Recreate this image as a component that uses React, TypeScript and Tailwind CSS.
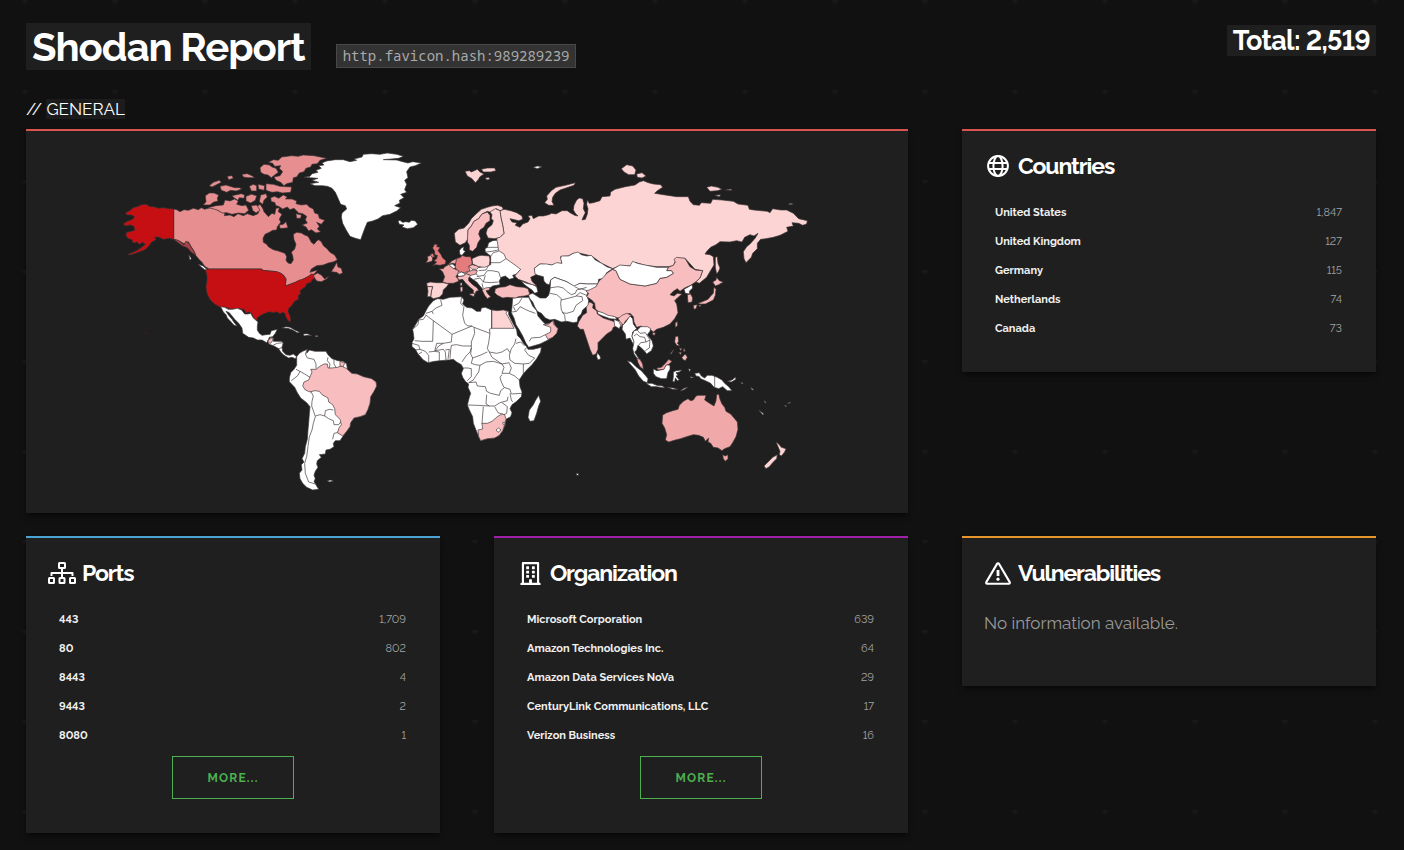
import type { ReactNode } from "react";
import { FaRegBuilding } from "react-icons/fa";

type Shape = [fill: string, d: string];

const WHITE = "#ffffff";
const US = "#c60f13";
const CANADA = "#e78f90";
const STRONG = "#e47c7e";
const MEDIUM = "#f0a8a9";
const SOFT = "#f8bdbe";
const PALE = "#fcd4d4";

const northAmerica: Shape[] = [
  [CANADA, "M191 192L200 194 210 200 222 194 235 196 250 190 265 194 274 188 284 193 300 188 318 192 330 200 345 205 343 212 360 210 372 215 384 206 400 212 412 206 430 212 444 206 448 195 440 185 450 178 458 190 462 200 475 215 486 205 494 208 498 190 508 188 505 200 516 208 508 222 512 232 502 245 500 255 488 256 478 262 465 268 459 280 460 292 470 298 476 306 490 314 505 318 525 325 530 335 528 346 534 354 543 356 550 345 548 332 544 322 554 312 558 298 552 284 550 268 560 262 574 264 584 270 594 274 600 284 604 292 612 298 620 288 626 284 634 290 640 302 652 312 660 322 674 330 682 344 672 350 655 354 640 360 620 362 604 372 600 382 612 378 622 376 612 388 592 396 575 405 556 412 540 418 526 423 528 402 520 390 500 380 458 376 455 372 297 372 284 364 276 352 268 344 258 332 252 318 244 306 235 290 222 296 208 288 191 283Z"],
  [US, "M297 372H455L458 376 478 378 500 380 512 384 520 390 528 402 526 423 540 418 556 412 566 406 578 403 592 396 604 387 612 388 618 399 608 403 602 412 590 416 586 425 576 432 570 437 572 446 564 452 566 462 552 470 545 482 536 490 534 500 539 510 542 522 541 530 535 528 528 516 524 504 518 502 510 506 500 500 490 503 478 500 462 506 450 512 442 518 440 527 432 520 426 508 418 500 408 504 404 495 392 491 375 492 360 492 347 487 332 487 315 478 302 466 294 452 290 440 288 425 291 408 291 392 286 374Z"],
  [US, "M191 192L176 191 160 188 146 190 130 185 120 185 108 178 92 180 86 184 70 188 58 198 46 204 52 210 66 210 74 216 66 224 50 230 40 237 46 242 62 240 72 244 74 256 60 260 50 262 48 272 54 280 66 284 68 292 76 294 80 290 88 298 98 292 106 298 94 308 78 318 54 328 60 330 84 322 104 314 116 304 124 292 138 284 134 276 146 276 160 283 178 280 191 283Z"],
  ["#a94145", "M191 283L205 286 215 294 222 300 228 288 238 296 244 308 250 316 256 330 244 322 232 308 216 302Z"],
  [CANADA, "M475 52L490 44 505 46 515 36 545 32 565 34 580 30 612 32 650 40 630 46 622 56 606 58 602 66 588 70 582 80 568 84 560 96 550 98 548 112 530 116 522 122 512 112 498 106 492 96 510 92 518 80 508 70 512 62 494 64 488 55Z"],
  [CANADA, "M450 68L462 58 478 60 486 66 498 70 505 82 494 90 484 98 474 90 462 88 452 82Z"],
  [CANADA, "M468 116L490 118 510 124 545 126 542 142 518 144 502 140 486 142 468 136Z"],
  [CANADA, "M482 158L494 154 506 160 520 150 532 156 526 162 546 162 560 168 558 176 574 180 590 178 598 186 610 192 614 204 625 208 628 220 644 226 634 238 620 232 628 244 622 252 632 260 618 264 604 254 596 258 588 246 576 240 592 234 586 224 590 214 578 206 566 204 552 190 540 194 532 186 518 192 506 184 498 182 494 172 484 170Z"],
  [CANADA, "M345 165L360 168 374 162 385 168 380 178 396 182 408 180 416 196 404 206 385 204 366 208 350 203 336 204 324 196 304 190 294 188 318 182 340 180Z"],
  [CANADA, "M286 152L298 144 312 144 326 150 322 160 324 168 310 172 300 180 280 180 288 170Z"],
  [CANADA, "M298 122L310 112 328 106 334 112 318 120 306 126Z"],
  [CANADA, "M330 124L348 120 360 124 374 128 388 128 396 132 378 138 362 136 350 142 334 136Z"],
  [CANADA, "M396 88L412 86 426 92 434 98 414 98 400 96Z"],
  [CANADA, "M418 124L430 118 440 122 440 138 424 138Z"],
  [CANADA, "M408 154L424 148 440 152 436 166 422 174 408 168Z"],
  [CANADA, "M452 150L468 146 472 156 462 166 458 178 448 170Z"],
  [CANADA, "M444 118L464 122 462 136 446 132Z"],
  [CANADA, "M366 152L394 146 404 150 402 160 388 158 384 166 374 160Z"],
  [CANADA, "M424 182L440 180 450 196 438 204 428 196Z"],
  [CANADA, "M508 240L520 238 528 230 534 248 520 250 510 250Z"],
  [CANADA, "M558 206L574 210 572 220 560 220Z"],
  [CANADA, "M352 94L366 92 370 100 356 104Z"],
  [CANADA, "M610 392L622 384 634 390 644 402 656 394 650 402 634 410 620 408Z"],
  [CANADA, "M664 380L674 364 680 352 684 366 694 370 698 384 688 388 680 382Z"],
  [WHITE, "M264 358L278 362 292 374 284 374Z"],
  [WHITE, "M236 330L244 340 240 346Z"],
];

const northAtlantic: Shape[] = [
  [WHITE, "M162 97L180 94 186 86 204 82 198 76 214 70 206 62 222 60 216 54 230 48 256 44 280 44 300 50 320 46 312 42 336 36 340 28 364 26 390 28 412 24 440 28 460 34 446 40 400 44 440 45 458 50 474 54 488 50 514 54 496 62 480 66 470 80 474 98 464 106 470 118 464 134 470 142 452 148 462 158 448 166 450 174 434 182 452 188 440 198 420 208 398 212 384 222 368 228 352 232 346 246 340 262 332 284 316 280 300 274 288 254 278 235 274 216 276 204 290 192 286 182 272 178 266 164 256 142 246 130 232 124 216 122 195 122 180 116 206 112 186 106 204 100Z"],
  [WHITE, "M444 228L450 226 458 232 468 230 478 232 484 226 496 228 503 238 490 248 472 251 456 246 462 240 448 238Z"],
];

/* Latin America is drawn as a landmass with tinted countries and borders laid over it. */
const latinAmerica: Shape[] = [
  [WHITE, "M62 50L74 52 85 58 98 58 112 55 125 60 134 72 144 72 152 70 160 84 174 96 172 108 172 120 178 130 186 136 198 134 210 133 214 122 232 118 226 130 218 140 208 142 204 152 200 158 186 150 172 150 160 144 146 142 128 130 126 114 116 100 104 88 96 78 88 68 78 64 86 76 96 88 104 100 112 108 102 106 90 92 82 84 78 74 70 66Z"],
  [WHITE, "M203 152L212 142 220 144 220 154 244 154 250 158 246 172 248 184 258 194 270 196 280 192 290 200 286 206 276 202 266 204 252 196 242 186 236 176 222 168 206 162Z"],
  [SOFT, "M206 150L216 142 218 152 212 160 204 158Z"],
  [WHITE, "M246 114L258 110 270 112 284 120 300 127 292 128 278 120 264 115Z"],
  [WHITE, "M310 132L322 131 336 137 322 136 312 138Z"],
  [WHITE, "M346 137H354V140H346Z"],
  [WHITE, "M290 200L298 190 308 184 322 178 320 190 328 180 345 184 362 184 378 184 384 194 396 206 414 212 430 214 440 222 442 238 455 250 472 252 490 260 515 266 528 276 530 288 522 304 512 320 510 340 504 358 496 374 480 380 462 384 452 398 450 410 440 424 428 440 420 452 406 452 400 460 402 470 390 478 378 480 376 492 358 494 364 502 352 512 350 522 354 532 346 544 342 556 346 566 342 574 350 588 356 598 338 600 320 592 308 580 300 566 298 550 306 540 304 524 312 516 306 506 314 490 316 470 322 448 324 420 326 398 328 372 330 350 320 338 302 324 292 308 284 292 268 275 268 264 272 248 282 238 290 226 290 212Z"],
  [SOFT, "M440 236L455 250 472 252 490 260 515 266 528 276 530 288 522 304 512 320 510 340 504 358 496 374 480 380 462 384 452 398 450 410 440 424 428 438 412 428 418 412 424 404 420 388 406 374 404 356 398 344 386 336 384 324 366 314 358 304 344 302 330 306 316 300 308 288 312 276 326 270 332 256 336 246 332 238 348 238 358 230 372 222 382 222 384 234 396 234 412 232 424 228Z"],
  [SOFT, "M420 214L434 218 430 230 420 228Z"],
  ["none", "M220 165L232 160 250 158M236 176L248 172M322 178L316 192 322 204 342 208 348 222 348 236M384 202L382 212 390 222 388 234M402 210L402 222 408 232M288 238L300 244 294 256 282 266 274 272M300 244L314 252 330 262M332 304L340 318 336 334 335 348 340 362 346 380 340 400 336 420 328 440 324 470 320 500 314 520 316 550 326 576 346 582M346 378L360 374 374 378 376 362 388 358 400 360M374 378L386 386 400 392 402 404 416 404 422 396M412 428L402 430 398 448"],
  [WHITE, "M382 572L392 570 400 573 388 576Z"],
];

const eurasia: Shape[] = [
  [WHITE, "M255 296L262 292 266 278 278 272 295 270 300 290 320 310 345 338 364 356 350 372 338 376 342 384 328 388 316 378 304 382 298 392 300 404 278 408 270 414 250 420 240 408 230 396 218 388 204 378 180 378 170 370 180 350 240 352 272 344 272 318 256 306Z"],
  ["none", "M256 292L294 292M258 306L276 304 294 300M271 320L280 308 296 304M270 338L300 338 318 326M262 362L276 362 296 366 302 384M236 362L258 360 266 346M230 380L252 376 262 362M222 388L240 384 250 396 270 398 296 396M246 400L250 416M256 376L250 396M228 372L236 378"],
  [PALE, "M300 182L312 178 332 182 350 188 366 198 368 208 356 212 338 208 330 206 336 216 350 218 346 226 360 232 368 222 384 216 390 206 384 198 396 196 400 206 416 198 430 198 446 194 455 190 468 192 486 182 502 182 510 188 524 196 534 198 526 190 520 180 522 166 530 150 538 144 548 146 552 160 550 176 556 188 550 200 546 210 556 208 562 192 564 176 560 164 562 150 568 160 580 158 600 152 606 140 630 138 632 126 645 118 676 110 705 105 718 96 730 92 745 98 760 102 782 104 788 112 772 122 764 130 790 134 830 140 865 140 870 154 880 164 898 166 904 158 932 160 938 148 966 150 1000 154 1014 162 1044 166 1048 178 1062 180 1102 184 1110 188 1118 176 1142 180 1160 180 1180 190 1196 206 1222 212 1220 222 1208 226 1196 220 1176 218 1180 228 1160 232 1164 244 1140 256 1120 262 1098 266 1082 268 1072 280 1072 296 1058 310 1054 322 1038 338 1032 326 1030 305 1040 290 1050 282 1066 264 1074 250 1062 258 1050 254 1034 262 1026 276 1010 272 990 276 960 275 948 284 932 292 922 302 915 312 930 314 940 320 942 345 928 368 920 382 898 400 888 396 900 384 908 362 885 358 855 325 830 325 820 347 805 350 770 350 735 346 705 337 690 348 660 347 638 356 605 340 575 318 540 310 520 310 505 318 482 320 486 340 455 345 420 342 403 355 408 374 392 382 396 394 410 408 396 404 372 394 355 388 344 378 362 358 345 345 318 326 312 312 296 302 292 276 290 265 304 258 312 250 308 225 303 204Z"],
  [PALE, "M163 250L176 238 192 234 206 220 214 206 228 192 244 178 262 172 276 168 292 166 306 170 310 178 300 182 288 176 276 188 262 184 246 192 236 206 222 214 214 228 204 240 204 266 196 278 180 286 166 276Z"],
  [SOFT, "M262 186L270 196 270 212 258 220 252 232 240 240 236 252 242 266 234 278 230 292 218 304 208 300 208 286 202 276 204 240 214 228 222 214 236 206 246 192Z"],
  [PALE, "M270 186L286 176 300 182 303 204 308 225 312 250 300 262 284 266 264 264 258 250 262 236 276 224 280 212 274 206 276 194Z"],
  [PALE, "M195 64L208 62 214 66 232 58 240 66 252 72 240 80 234 90 226 98 216 86 202 78Z"],
  [PALE, "M244 58L262 54 284 54 288 62 272 66 250 66Z"],
  [PALE, "M256 84L266 82 270 88 260 90Z"],
  [WHITE, "M400 52L412 48 426 50 412 56Z"],
  [PALE, "M526 98L522 106 498 114 480 120 466 130 458 142 456 154 462 166 446 166 434 158 442 148 440 138 454 122 468 112 496 106Z"],
  [STRONG, "M98 294L104 282 112 284 110 290 120 292 114 302 122 312 128 324 138 332 136 342 120 346 106 344 98 348 110 336 102 332 110 326 112 316 104 314 104 304Z"],
  [STRONG, "M90 314L98 310 104 320 96 322Z"],
  [MEDIUM, "M82 320L92 316 98 324 96 334 78 338 84 328Z"],
  [WHITE, "M178 302L184 294 192 290 190 300 196 304 186 316 180 314Z"],
  [STRONG, "M168 326L182 322 186 316 198 320 212 320 216 334 216 344 206 350 210 362 194 368 176 366 166 354Z"],
  [MEDIUM, "M156 332L170 326 166 342 158 340 144 344Z"],
  [WHITE, "M142 344L158 342 168 352 160 356Z"],
  [MEDIUM, "M118 356L130 356 134 350 146 344 158 354 176 362 174 370 168 380 174 386 176 394 160 400 140 400 128 396 134 380 128 366Z"],
  [WHITE, "M172 372L184 366 196 372 190 378 176 380Z"],
  [PALE, "M80 400L90 396 110 398 130 398 146 402 140 410 130 420 128 432 118 442 100 446 92 440 94 424 98 410 82 410Z"],
  [PALE, "M82 410L98 410 94 424 92 440 82 440 84 424Z"],
  [SOFT, "M172 380L190 378 200 370 212 376 206 384 206 392 218 404 232 414 236 422 228 424 226 432 220 432 220 420 208 410 196 398 188 388 176 390Z"],
  [SOFT, "M208 432L224 430 222 440 212 436Z"],
  [WHITE, "M180 400L186 398 186 406 182 408Z"],
  [SOFT, "M180 412L188 410 188 424 182 426Z"],
  [MEDIUM, "M196 370L208 364 220 360 232 362 228 372 212 376Z"],
  [SOFT, "M206 348L218 344 238 350 230 358 216 358Z"],
  [PALE, "M216 326L234 318 244 316 268 318 270 330 268 346 254 352 236 350 218 342Z"],
  [SOFT, "M246 420L256 414 270 412 268 420 258 422 264 432 272 440 262 446 254 436Z"],
  [SOFT, "M286 416L298 412 316 410 330 404 350 410 372 412 384 416 390 434 374 438 356 440 346 444 322 442 308 444 292 436 284 428Z"],
  [WHITE, "M362 392L380 400 398 404 410 410 414 426 404 430 396 420 384 412 374 404Z"],
  [WHITE, "M403 355L420 342 440 342 455 345 470 338 486 340 482 326 484 318 505 318 520 310 534 306 544 314 560 318 574 316 586 330 605 340 620 350 638 356 626 364 618 370 620 384 596 388 594 402 560 402 540 400 522 410 500 395 480 388 464 382 452 390 448 404 440 402 432 394 430 380 414 376 405 372Z"],
  [WHITE, "M452 390L464 382 480 388 500 395 522 408 540 400 560 402 594 402 584 418 566 424 560 436 566 452 564 466 548 480 544 492 534 502 532 516 520 518 500 514 484 516 464 508 450 510 436 504 424 490 412 484 404 470 398 456 388 444 386 434 398 430 420 444 438 444 446 436 450 420Z"],
  ["none", "M448 414L474 410 490 414 500 424 514 434M450 430L470 434 484 446 482 460 484 480 494 496 496 514M484 450L508 444 530 438 546 440 548 452 528 466 520 484 500 490 486 488M514 434L526 430 530 420 544 416 566 424M524 410L540 418 560 412M528 438L540 428 560 436"],
];

const eastAsia: Shape[] = [
  [SOFT, "M158 358L168 362 175 378 180 388 210 402 255 408 290 400 300 385 320 382 340 370 334 362 320 362 325 352 340 346 346 336 342 328 350 322 375 325 390 350 406 360 428 362 420 384 408 395 392 406 374 414 360 424 352 416 340 424 330 434 342 438 352 430 366 432 352 444 344 452 350 462 352 474 354 488 344 506 330 522 310 532 290 538 280 546 268 536 252 538 244 528 230 532 222 516 220 500 210 490 196 494 185 505 160 502 145 500 128 490 115 485 106 476 104 460 95 450 80 440 86 430 78 424 92 418 108 410 118 392 130 382 140 370Z"],
  [WHITE, "M158 358L180 345 210 348 218 334 232 340 255 345 290 352 325 352 320 362 334 362 340 370 320 382 300 385 290 400 255 408 210 402 180 388 175 378 168 362Z"],
  [PALE, "M466 322L472 320 474 340 480 354 476 364 470 372 466 352Z"],
  [PALE, "M184 56L200 44 218 48 228 60 224 74 206 74 192 66Z"],
  [PALE, "M230 72L246 68 258 78 246 84 232 82Z"],
  [PALE, "M440 112L454 108 474 112 486 118 472 122 450 124Z"],
  [PALE, "M496 120L512 117 516 121Z"],
  [PALE, "M464 136L482 134 478 140Z"],
  [WHITE, "M684 164L692 160 700 163Z"],
  [WHITE, "M372 418L386 410 396 404 398 414 388 424 390 432 376 430Z"],
  [SOFT, "M382 434L392 432 398 444 396 456 384 458Z"],
  [SOFT, "M458 396L468 390 470 382 478 392 490 396 476 404 466 408Z"],
  [SOFT, "M462 412L468 418 466 436 460 450 448 456 436 462 420 462 414 460 430 454 444 448 452 438 460 430Z"],
  [SOFT, "M400 466L412 464 408 476 402 478Z"],
  [SOFT, "M416 466L424 464 420 470Z"],
  [SOFT, "M346 520L352 514 352 526 346 532Z"],
];

const africaAndIndia: Shape[] = [
  [WHITE, "M100 62L112 56 130 58 150 52 185 50 192 60 188 72 200 82 216 84 230 94 242 94 244 84 256 82 275 90 292 92 310 90 326 94 326 104 334 120 342 136 350 150 352 166 362 176 370 190 380 200 384 208 400 208 424 202 422 216 410 236 396 254 380 270 368 284 358 300 360 320 366 336 364 350 350 364 336 374 330 386 336 398 332 410 318 418 316 434 308 452 298 466 284 474 262 476 242 482 236 470 228 450 220 430 218 410 208 390 202 375 208 352 212 340 204 322 206 312 196 304 188 292 184 280 190 266 184 254 170 246 160 238 146 240 120 242 104 244 84 248 70 240 54 222 46 208 36 200 36 188 42 176 40 160 38 148 48 132 56 118 70 108 78 92 86 78Z"],
  [PALE, "M275 90L292 92 310 90 322 94 318 100 330 120 342 145H275Z"],
  ["none", "M122 60L126 76 108 84 96 94 78 100M96 94L100 102M78 106L70 118 56 120 54 134 40 146M76 104L100 122 98 184 66 184 44 182M100 122L156 163 216 138M185 50L182 70 192 80 188 106 194 130 204 138 216 138 222 142 270 160M275 88L275 145M270 160L268 148 275 145M222 142L224 160 214 186 214 204M270 160L266 188 262 206 268 216M156 163L154 186 130 190 116 198 106 212M154 196L170 194 188 198 214 198M154 196L152 210 150 236M214 204L210 216 198 228 186 246M214 204L212 222 218 234 240 226 262 216M218 234L214 250 226 254 240 256 258 246 280 244 306 252M268 216L290 220 306 216 322 206 330 218M268 216L276 232 288 240 306 252 328 248M348 176L344 192 334 206 328 226 330 240 344 250 370 252 388 250 404 234 386 226 374 210 380 202M348 190L362 186 374 198M370 252L370 284M328 250L334 264 328 280 344 288 358 300M306 252L312 262 306 280 328 280M306 284L300 292 304 306 312 322 330 328 334 342 364 340M240 256L236 276 226 290 220 300 206 308M188 264L204 264 214 266 214 290 202 302M206 308L228 306 232 318 256 320 260 334 272 340 298 346 302 332 312 324M260 344L258 372 268 378 284 378 300 368 322 362 324 350M202 375L232 376 268 378M250 380L248 404 246 432M284 380L294 398 312 404 320 400 322 380 306 368M330 340L334 360 338 366M36 190L56 196 60 208 46 210M60 208L76 214 86 226 86 246M56 222L66 216M86 216L104 214 118 216 118 242M106 212L130 208 136 216 138 240M136 210L148 208 144 238M104 214L110 190 130 190M186 264L186 270"],
  [SOFT, "M234 450L248 447 246 430 262 430 276 424 292 410 306 402 314 404 318 418 314 434 308 452 298 466 284 474 262 476 242 482 236 470Z"],
  [WHITE, "M288 450L296 444 303 450 294 457Z"],
  [WHITE, "M308 428L314 426 315 434 310 434Z"],
  [WHITE, "M416 346L422 364 416 378 410 400 402 422 390 424 384 412 388 390 400 374 406 362Z"],
  [WHITE, "M338 54L360 52 386 52 392 64 398 78 410 92 414 108 426 122 436 132 454 128 460 120 464 134 474 146 470 160 458 172 440 182 420 192 386 202 378 190 368 168 358 150 348 134 342 114 334 98 336 80Z"],
  [SOFT, "M430 134L444 134 458 122 462 134 474 146 470 160 458 172 444 178 436 164 452 156 452 142Z"],
  ["none", "M340 78L356 70 366 54M336 96L350 94 360 80 384 92 406 100M388 184L394 174 420 172 436 164M340 80L346 92"],
  [SOFT, "M558 72L570 66 580 72 578 84 590 92 592 102 610 114 640 124 660 122 668 128 664 140 650 138 640 142 636 152 620 162 606 176 594 188 594 208 588 222 578 226 570 208 562 184 554 160 550 148 540 148 532 138 536 126 548 106 560 98Z"],
  [WHITE, "M592 218L600 228 602 236 594 240 590 230Z"],
  [WHITE, "M529 580L536 581 535 586 530 586Z"],
];

const oceania: Shape[] = [
  [WHITE, "M22 93L38 98 54 106 76 110 80 118 60 116 38 108 24 102Z"],
  [SOFT, "M84 116L96 106 110 100 124 106 116 114 106 124 100 136 90 124Z"],
  [WHITE, "M72 118L86 124 92 136 88 146 74 138Z"],
  [WHITE, "M120 108L128 116 130 132 140 146 128 156 126 170 132 184 132 196 126 186 120 174 108 178 106 162 96 148 98 136 106 128Z"],
  [WHITE, "M132 152L142 150 152 140 172 140 182 146 180 154 172 164 186 182 190 198 184 212 170 222 164 214 152 202 144 196 140 210 134 216 144 232 150 242 142 236 132 222 128 206 132 186 126 168Z"],
  ["none", "M140 148L150 160 166 158 180 180M132 168L140 162 150 170 164 172 168 186 152 188 146 196M168 186L180 180 178 204 166 212"],
  [MEDIUM, "M140 234L150 238 158 252 160 268 150 260 144 248Z"],
  [WHITE, "M112 242L124 246 138 260 154 272 166 286 174 296 172 308 160 304 146 288 136 270 122 254Z"],
  [WHITE, "M168 310L186 310 200 316 218 318 224 324 200 320 184 320Z"],
  [WHITE, "M190 266L200 272 220 268 228 254 240 256 240 268 234 278 230 296 214 296 198 290 190 280Z"],
  [MEDIUM, "M200 264L214 262 226 250 236 238 246 244 238 252 228 256 222 268 204 270Z"],
  [WHITE, "M250 276L258 272 276 270 268 276 258 278 264 286 258 288 268 300 262 302 256 294 254 306 248 304 250 290Z"],
  [WHITE, "M232 322L250 324 264 328 248 328ZM270 332L284 324 294 322 280 330ZM296 266L302 268 298 276ZM300 290L312 292 304 294Z"],
  [WHITE, "M314 280L328 278 334 288 344 294 352 286 366 286 382 292 396 300 404 310 416 320 426 332 412 332 398 320 386 326 372 322 362 310 346 302 332 296 328 290 318 288Z"],
  ["none", "M374 288V322"],
  [WHITE, "M412 304L426 300 436 292 438 298 424 306ZM452 306L460 310 456 312ZM482 322L492 330 486 330ZM506 390L522 402 518 404ZM522 362L528 366 526 370ZM584 376L590 378 586 380ZM592 370L602 366 600 370Z"],
  [SOFT, "M256 170L264 168 266 184 262 190 270 198 260 196 254 186Z"],
  [SOFT, "M276 232L286 222 292 232 286 242 278 238ZM268 204L276 206 272 212ZM282 204L286 214 280 214ZM240 222L252 208 244 222ZM266 218L274 216 272 224Z"],
  [SOFT, "M188 158L196 158 194 166 188 164ZM256 128L262 126 262 138 256 142Z"],
  [MEDIUM, "M218 405L230 398 248 392 264 388 268 376 280 364 294 356 302 362 310 360 318 348 326 346 348 346 344 360 356 368 372 378 378 362 380 344 386 342 390 358 396 372 404 382 408 394 422 402 434 416 442 426 444 448 438 470 428 488 420 500 404 506 396 512 384 504 370 502 362 490 354 486 356 474 346 484 340 472 326 466 310 464 290 470 272 476 256 480 236 486 226 480 230 464 224 444 216 430Z"],
  [MEDIUM, "M398 524L406 528 414 524 414 536 406 544 400 536Z"],
  [PALE, "M558 486L566 492 574 502 588 506 584 516 574 528 568 524 570 514Z"],
  [PALE, "M562 524L560 536 548 548 538 560 528 566 522 558 534 546 548 532Z"],
];

const regions: [string, string, Shape[]][] = [
  ["North America", "translate(110 145) scale(0.33333)", northAmerica],
  ["North Atlantic", "translate(250 145) scale(0.33333)", northAtlantic],
  ["Latin America", "translate(200 290) scale(0.33333)", latinAmerica],
  ["Africa and India", "translate(400 280) scale(0.33333)", africaAndIndia],
  ["Europe and Russia", "translate(400 150) scale(0.33333)", eurasia],
  ["East Asia", "translate(560 150) scale(0.33333)", eastAsia],
  ["Oceania", "translate(590 280) scale(0.33333)", oceania],
];

function WorldMap() {
  return (
    <svg viewBox="26 131 882 382" className="block w-full" role="img" aria-label="Results by country">
      {regions.map(([name, transform, shapes]) => (
        <g key={name} transform={transform} stroke="#3c3436" strokeWidth="2" strokeLinejoin="round">
          {shapes.map(([fill, d], i) => (
            <path key={i} fill={fill} d={d} />
          ))}
        </g>
      ))}
      <circle cx="146" cy="333" r="1" fill="#4a1a1c" />
    </svg>
  );
}

function GlobeIcon() {
  return (
    <svg viewBox="0 0 22 22" className="size-[22px]" fill="none" stroke="currentColor" strokeWidth="2" aria-hidden="true">
      <circle cx="11" cy="11" r="9.9" />
      <ellipse cx="11" cy="11" rx="4.6" ry="9.9" />
      <path d="M1.8 7.9H20.2M1.8 14.1H20.2" />
    </svg>
  );
}

function SitemapIcon() {
  return (
    <svg viewBox="0 0 28 22" className="h-[22px] w-7" fill="none" stroke="currentColor" strokeWidth="2" strokeLinejoin="round" aria-hidden="true">
      <rect x="11" y="1" width="6" height="5" rx="0.5" />
      <rect x="1" y="16" width="5" height="5" rx="0.5" />
      <rect x="11.5" y="16" width="5" height="5" rx="0.5" />
      <rect x="22" y="16" width="5" height="5" rx="0.5" />
      <path d="M14 6V16M3.5 14V11H24.5V14" />
    </svg>
  );
}

function WarningIcon() {
  return (
    <svg viewBox="0 0 26 23" className="h-[23px] w-[26px]" fill="none" stroke="currentColor" strokeWidth="2.1" strokeLinejoin="round" aria-hidden="true">
      <path d="M13 1.4Q13.7 1.4 14.1 2.1L24.7 20.1Q25.2 21.6 23.8 21.8H2.2Q.8 21.6 1.3 20.1L11.9 2.1Q12.3 1.4 13 1.4Z" />
      <path d="M13 8V14" strokeWidth="2.8" />
      <circle cx="13" cy="17.2" r="1.6" fill="currentColor" stroke="none" />
    </svg>
  );
}

function Panel({ accent, icon, title, children }: { accent: string; icon: ReactNode; title: string; children: ReactNode }) {
  return (
    <section className={`border-t-2 bg-[#1f1f1f] px-[22px] pt-[19px] pb-7 shadow-md shadow-black/40 ${accent}`}>
      <h2 className="flex h-8 items-center gap-1.5 text-[23px] font-bold tracking-tighter text-white">
        <span className="flex w-7 justify-center">{icon}</span>
        {title}
      </h2>
      {children}
    </section>
  );
}

function Facets({ label: tableLabel, rows }: { label: string; rows: [string, string][] }) {
  return (
    <table aria-label={tableLabel} className="mt-[17px] w-full text-[11px]">
      <tbody>
        {rows.map(([label, count]) => (
          <tr key={label} className="h-[29px]">
            <th scope="row" className="pl-[11px] text-left font-bold text-[#f0f0f0]">{label}</th>
            <td className="pr-3 text-right text-[#a3a3a3]">{count}</td>
          </tr>
        ))}
      </tbody>
    </table>
  );
}

function MoreLink() {
  return (
    <div className="mt-[5px] mb-1.5 flex justify-center">
      <a href="#more" className="flex h-[43px] w-[122px] items-center justify-center border border-current text-xs font-bold tracking-widest text-[#4caf50]">
        MORE...
      </a>
    </div>
  );
}

const countries: [string, string][] = [
  ["United States", "1,847"],
  ["United Kingdom", "127"],
  ["Germany", "115"],
  ["Netherlands", "74"],
  ["Canada", "73"],
];

const ports: [string, string][] = [
  ["443", "1,709"],
  ["80", "802"],
  ["8443", "4"],
  ["9443", "2"],
  ["8080", "1"],
];

const organizations: [string, string][] = [
  ["Microsoft Corporation", "639"],
  ["Amazon Technologies Inc.", "64"],
  ["Amazon Data Services NoVa", "29"],
  ["CenturyLink Communications, LLC", "17"],
  ["Verizon Business", "16"],
];

export default function App() {
  return (
    <div className="min-h-screen bg-[#111111] bg-[radial-gradient(circle_at_25px_1px,#1c1c1c_0,#161616_2px,transparent_4px)] bg-size-[90px_90px] pt-[23px] pr-7 pb-4 pl-[26px] font-['Raleway','Lato',sans-serif] text-white lining-nums">
      <header className="flex items-start justify-between">
        <div className="flex items-end gap-[25px]">
          <h1 className="bg-[#1f1f1f] px-1.5 text-[40px] leading-[47px] font-bold tracking-tight">Shodan Report</h1>
          <code className="mb-0.5 border border-[#484848] bg-[#333] px-1.5 font-['Noto_Sans_Mono','Noto_Mono','DejaVu_Sans_Mono',monospace] text-sm leading-[22px] text-[#aaa]">
            http.favicon.hash:989289239
          </code>
        </div>
        <p className="mt-0.5 bg-[#1f1f1f] px-1.5 text-[27px] leading-[31px] font-bold tracking-tight">Total: 2,519</p>
      </header>

      <h2 className="mt-[29px] text-[17px] leading-5">
        // <span className="bg-[#1c1c1c]">GENERAL</span>
      </h2>

      <main className="mt-2.5 grid grid-cols-3 items-start gap-x-[54px] gap-y-[23px]">
        <section className="col-span-2 border-t-2 border-[#d9534f] bg-[#1f1f1f] shadow-md shadow-black/40">
          <WorldMap />
        </section>
        <Panel accent="border-[#d9534f]" icon={<GlobeIcon />} title="Countries">
          <Facets label="Countries" rows={countries} />
        </Panel>
        <Panel accent="border-[#4ba3d3]" icon={<SitemapIcon />} title="Ports">
          <Facets label="Ports" rows={ports} />
          <MoreLink />
        </Panel>
        <Panel accent="border-[#a020a8]" icon={<FaRegBuilding className="size-[23px]" aria-hidden="true" />} title="Organization">
          <Facets label="Organizations" rows={organizations} />
          <MoreLink />
        </Panel>
        <Panel accent="border-[#e8952b]" icon={<WarningIcon />} title="Vulnerabilities">
          <p className="mt-5 mb-[21px] text-[17px] leading-7 text-[#999]">No information available.</p>
        </Panel>
      </main>
    </div>
  );
}
